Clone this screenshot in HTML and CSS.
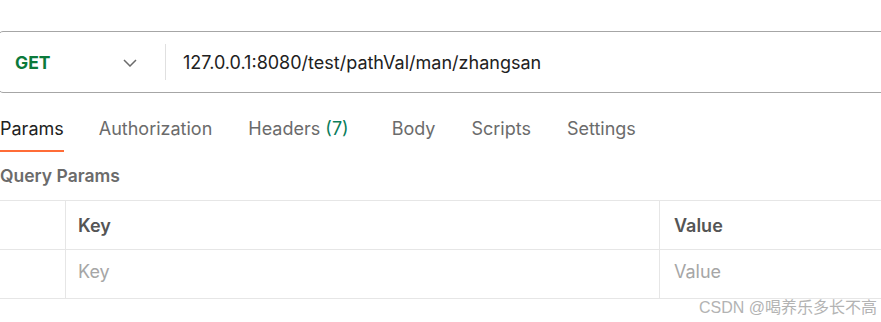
FILE: index.html
```html
<!DOCTYPE html>
<html lang="en">
<head>
  <meta charset="UTF-8">
  <title>Request</title>
  <link rel="stylesheet" href="styles.css">
</head>
<body>
  <div class="url-bar">
    <div class="method">
      <span class="method-name">GET</span>
      <svg class="chevron" width="14" height="8" viewBox="0 0 14 8"><path d="M1 1l6 6 6-6" fill="none" stroke="#6b6b6b" stroke-width="1.5"/></svg>
    </div>
    <div class="url">127.0.0.1:8080/test/pathVal/man/zhangsan</div>
  </div>

  <nav class="tabs">
    <span class="tab active">Params</span>
    <span class="tab">Authorization</span>
    <span class="tab headers">Headers <span class="count">(7)</span></span>
    <span class="tab">Body</span>
    <span class="tab">Scripts</span>
    <span class="tab">Settings</span>
  </nav>

  <h3 class="section-title">Query Params</h3>

  <div class="params-table">
    <div class="row head">
      <div class="cell check"></div>
      <div class="cell key">Key</div>
      <div class="cell value">Value</div>
    </div>
    <div class="row">
      <div class="cell check"></div>
      <div class="cell key placeholder">Key</div>
      <div class="cell value placeholder">Value</div>
    </div>
  </div>

  <div class="watermark">CSDN @喝养乐多长不高</div>
</body>
</html>
```

FILE: styles.css
```css
body {
  margin: 0;
  background: #fff;
  font-family: Inter, "Noto Sans", sans-serif;
  font-size: 18px;
  color: #212121;
  width: 881px;
  height: 322px;
  overflow: hidden;
  position: relative;
}
.url-bar {
  display: flex;
  align-items: center;
  margin: 31px 0 0 -2px;
  width: 890px;
  height: 60px;
  border: 1px solid #a6a6a6;
  border-radius: 5px;
}
.method {
  display: flex;
  align-items: center;
  justify-content: space-between;
  width: 122px;
  padding: 0 28px 0 16px;
  height: 36px;
  border-right: 1px solid #e0e0e0;
}
.method-name {
  color: #0b7a3b;
  font-weight: 700;
  font-size: 17.5px;
}
.chevron {
  margin-top: 1px;
}
.url {
  padding-left: 17px;
  color: #212121;
}
.tabs {
  display: flex;
  gap: 36px;
  margin-top: 15px;
  height: 44px;
}
.tab {
  color: #6b6b6b;
  line-height: 42px;
  height: 42px;
  white-space: nowrap;
  border-bottom: 2px solid transparent;
}
.tab.active {
  margin-right: -1px;
  color: #212121;
  border-bottom-color: #ff6c37;
}
.tab.headers {
  margin-right: 7px;
}
.count {
  color: #0a7d5a;
}
.section-title {
  margin: 12px 0 0;
  font-size: 17.5px;
  font-weight: 600;
  color: #6b6b6b;
  line-height: 24px;
}
.params-table {
  margin-top: 12px;
  width: 900px;
  border-top: 1px solid #e6e6e6;
}
.row {
  display: flex;
  height: 48px;
  border-bottom: 1px solid #e6e6e6;
}
.cell {
  display: flex;
  align-items: center;
}
.check {
  width: 65px;
  border-right: 1px solid #e6e6e6;
}
.key {
  width: 581px;
  padding-left: 12px;
  border-right: 1px solid #e6e6e6;
}
.value {
  padding-left: 14px;
}
.head .cell {
  font-weight: 600;
  color: #555;
}
.placeholder {
  color: #a6a6a6;
}
.row:not(.head) .cell {
  padding-bottom: 5px;
}
.watermark {
  position: absolute;
  right: 4px;
  top: 294px;
  font-size: 16px;
  color: #b3b3b3;
  font-family: "Liberation Sans", "Noto Sans CJK SC", sans-serif;
}
```
